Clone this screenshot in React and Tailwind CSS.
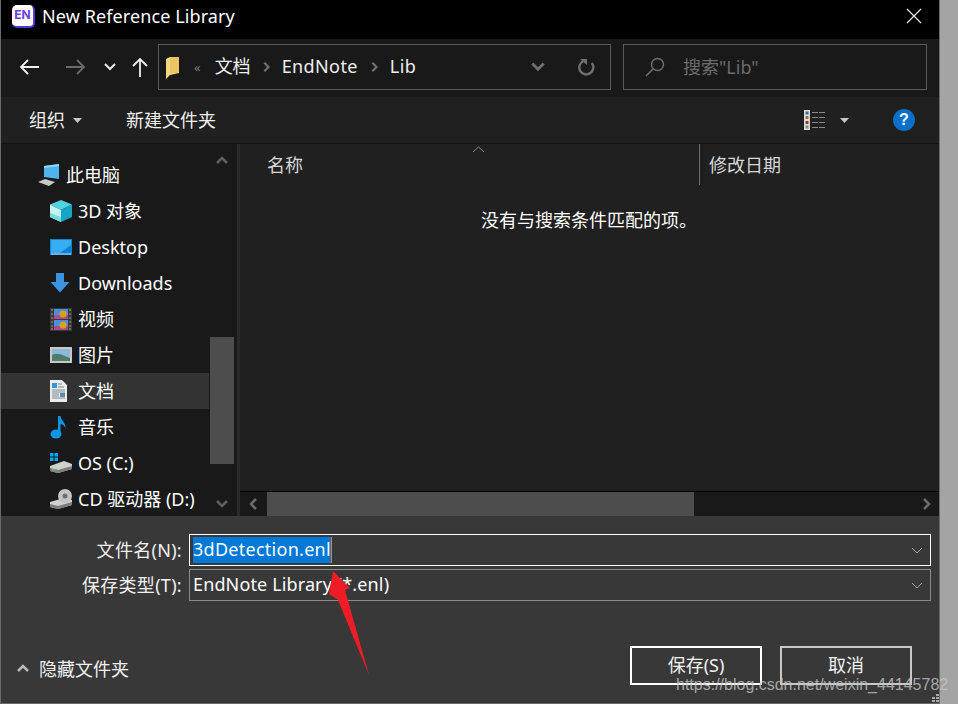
import React from 'react'

function Chevron({ dir = 'down', className = '', size = 14, width = 2.5, color = '#6b6b6b' }) {
  const paths = {
    down: 'M2 4 L7 9 L12 4',
    up: 'M2 10 L7 5 L12 10',
    left: 'M9 2 L4 7 L9 12',
    right: 'M5 2 L10 7 L5 12',
  }
  return (
    <svg width={size} height={size} viewBox="0 0 14 14" className={className}>
      <path d={paths[dir]} fill="none" stroke={color} strokeWidth={width} />
    </svg>
  )
}

function Caret() {
  return (
    <svg width="9" height="5" viewBox="0 0 9 5">
      <path d="M0 0 H9 L4.5 5 Z" fill="#c8c8c8" />
    </svg>
  )
}

function PcIcon() {
  return (
    <svg width="24" height="24" viewBox="0 0 24 24">
      <path d="M7 3 L22 1 V16 L7 14 Z" fill="#4fb3ee" />
      <path d="M7 3 L22 1 V3 L7 5 Z" fill="#8fd4f8" />
      <path d="M1 19 L8 16 L18 19 L12 23 Z" fill="#c9c9c9" />
    </svg>
  )
}

function CubeIcon() {
  return (
    <svg width="22" height="22" viewBox="0 0 22 22">
      <path d="M11 0 L22 4.5 L11 10 L0 4.5 Z" fill="#4fd3e0" />
      <path d="M0 4.5 L11 10 V22 L0 17 Z" fill="#c4f3f4" />
      <path d="M22 4.5 L11 10 V22 L22 17 Z" fill="#17a5c4" />
      <path d="M0 13 L11 17 V22 L0 17 Z" fill="#6fdcdf" />
    </svg>
  )
}

function DesktopIcon() {
  return (
    <svg width="22" height="16" viewBox="0 0 22 16">
      <rect width="22" height="16" fill="#0d84d8" />
      <path d="M1 14 L1 1 H21 V6 L10 14 Z" fill="#35aef2" />
      <rect x="1" y="14.5" width="20" height="1" fill="#bfe4fa" />
    </svg>
  )
}

function DownloadIcon() {
  return (
    <svg width="20" height="20" viewBox="0 0 20 20">
      <path d="M6 0 H14 V9 H19.5 L10 19.5 L0.5 9 H6 Z" fill="#3a94e0" />
    </svg>
  )
}

function VideoIcon() {
  return (
    <svg width="22" height="23" viewBox="0 0 22 23">
      <rect width="22" height="23" fill="#3a3a3a" />
      <path d="M1 2 H3 M1 6 H3 M1 10 H3 M1 14 H3 M1 18 H3 M1 21 H3 M19 2 H21 M19 6 H21 M19 10 H21 M19 14 H21 M19 18 H21 M19 21 H21" stroke="#9a9a9a" strokeWidth="1" />
      <rect x="4" y="1" width="14" height="10" fill="#4a8fe0" />
      <rect x="4" y="12" width="14" height="10" fill="#4a8fe0" />
      <rect x="4" y="7" width="14" height="4" fill="#b04a8a" />
      <rect x="4" y="18" width="14" height="4" fill="#b04a8a" />
      <circle cx="13" cy="6" r="3.5" fill="#d8a020" />
      <circle cx="13" cy="17" r="3.5" fill="#d8a020" />
    </svg>
  )
}

function PictureIcon() {
  return (
    <svg width="22" height="16" viewBox="0 0 22 16">
      <rect width="22" height="16" fill="#c8c8c8" />
      <rect x="2" y="2" width="18" height="12" fill="#8db9d8" />
      <path d="M2 8 C7 5 12 8 20 11 V14 H2 Z" fill="#4d7d6a" />
    </svg>
  )
}

function DocIcon() {
  return (
    <svg width="17" height="22" viewBox="0 0 17 22">
      <path d="M0 0 H12 L17 5 V22 H0 Z" fill="#ececec" />
      <rect x="2" y="3" width="5" height="5" fill="#3a94e0" />
      <path d="M8 4 H12 M8 7 H14 M2 10 H15 M2 12 H15 M2 14 H9 M2 16 H9 M2 18 H15" stroke="#7a8a96" strokeWidth="1" />
      <rect x="10" y="13" width="5" height="4" fill="#5a8fb0" />
    </svg>
  )
}

function MusicIcon() {
  return (
    <svg width="16" height="24" viewBox="0 0 16 24">
      <ellipse cx="6" cy="19" rx="5.5" ry="4.5" fill="#0a97e8" />
      <path d="M8 1 H10.5 C11 6 16 7 15.5 14 C15 11 13 9.5 10.5 9 V19 H8 Z" fill="#0a97e8" />
    </svg>
  )
}

function DriveOsIcon() {
  return (
    <svg width="22" height="20" viewBox="0 0 22 20">
      <rect x="0" y="0" width="3.5" height="3.5" fill="#00a8f0" />
      <rect x="4.5" y="0" width="3.5" height="3.5" fill="#00a8f0" />
      <rect x="0" y="4.5" width="3.5" height="3.5" fill="#00a8f0" />
      <rect x="4.5" y="4.5" width="3.5" height="3.5" fill="#00a8f0" />
      <path d="M0 13 L14 8 L22 11 V16 L8 20 L0 18 Z" fill="#d0d0d0" />
      <path d="M0 15 L8 17 L22 13 V16 L8 20 L0 18 Z" fill="#7d7d7d" />
      <rect x="2" y="16" width="5" height="1.5" fill="#56c060" />
    </svg>
  )
}

function DriveCdIcon() {
  return (
    <svg width="22" height="20" viewBox="0 0 22 20">
      <path d="M0 13 L14 9 L22 11 V16 L8 20 L0 18 Z" fill="#d0d0d0" />
      <path d="M0 15 L8 17 L22 13 V16 L8 20 L0 18 Z" fill="#7d7d7d" />
      <circle cx="15" cy="7" r="7" fill="#c4c4c4" />
      <circle cx="15" cy="7" r="2.5" fill="#707070" />
    </svg>
  )
}

const navItems = [
  { label: '3D 对象', icon: <CubeIcon /> },
  { label: 'Desktop', icon: <DesktopIcon /> },
  { label: 'Downloads', icon: <DownloadIcon /> },
  { label: '视频', icon: <VideoIcon /> },
  { label: '图片', icon: <PictureIcon /> },
  { label: '文档', icon: <DocIcon />, active: true },
  { label: '音乐', icon: <MusicIcon /> },
  { label: 'OS (C:)', icon: <DriveOsIcon /> },
  { label: 'CD 驱动器 (D:)', icon: <DriveCdIcon /> },
]

function Sidebar() {
  return (
    <div className="w-[236px] shrink-0 flex bg-[#191919] overflow-hidden">
      <div className="w-[208px] shrink-0 pt-[13px]">
        <div className="h-[36px] flex items-center pl-[36px]">
          <div className="w-[29px] flex items-center"><PcIcon /></div>
          <span className="text-white whitespace-nowrap">此电脑</span>
        </div>
        {navItems.map((item) => (
          <div key={item.label} className={`h-[36px] flex items-center pl-[48px] ${item.active ? 'bg-[#333333]' : ''}`}>
            <div className="w-[29px] flex items-center justify-start pl-[1px]">{item.icon}</div>
            <span className="text-white whitespace-nowrap">{item.label}</span>
          </div>
        ))}
      </div>
      <div className="w-[24px] ml-[1px] shrink-0 flex flex-col items-center">
        <div className="h-[193px] w-full flex justify-center pt-[9px]">
          <Chevron dir="up" color="#5f5f5f" />
        </div>
        <div className="h-[127px] w-full bg-[#4d4d4d]"></div>
        <div className="h-[52px] w-full flex justify-center items-end pb-[5px]">
          <Chevron dir="down" color="#5f5f5f" />
        </div>
      </div>
    </div>
  )
}

function FileList() {
  return (
    <div className="flex-1 flex flex-col bg-[#202020] border-l-[3px] border-[#2a2a2a] relative">
      <div className="h-[41px] flex relative">
        <div className="w-[459px] pl-[27px] flex items-center text-[#d8d8d8] relative">
          名称
          <svg width="13" height="7" viewBox="0 0 13 7" className="absolute left-[232px] top-[2px]">
            <path d="M1 6 L6.5 1 L12 6" fill="none" stroke="#8a8a8a" strokeWidth="1" />
          </svg>
        </div>
        <div className="w-px h-[41px] bg-[#6b6b6b]"></div>
        <div className="pl-[9px] flex items-center text-[#d8d8d8]">修改日期</div>
      </div>
      <div className="flex-1 text-white pl-[241px] pt-[23px] whitespace-nowrap">没有与搜索条件匹配的项。</div>
      <div className="h-[25px] bg-[#191919] flex items-center border-t border-black">
        <div className="w-[27px] flex justify-center"><Chevron dir="left" color="#6b6b6b" /></div>
        <div className="w-[427px] h-full bg-[#4d4d4d]"></div>
        <div className="flex-1"></div>
        <div className="w-[27px] flex justify-center"><Chevron dir="right" color="#6b6b6b" /></div>
      </div>
    </div>
  )
}

function FormRow({ label, active, tracking, children }) {
  return (
    <div className="flex items-center">
      <div className="w-[181px] text-right text-[#f0f0f0] whitespace-nowrap tracking-[0.3px]">{label}</div>
      <div className={`ml-[7px] w-[742px] h-[32px] border flex items-center pl-[3px] pr-[7px] ${active ? 'border-white' : 'border-[#8c8c8c]'}`}>
        <div className={`flex-1 text-white whitespace-nowrap ${tracking}`}>{children}</div>
        <svg width="12" height="7" viewBox="0 0 12 7">
          <path d="M1 1 L6 6 L11 1" fill="none" stroke="#a8a8a8" strokeWidth="1" />
        </svg>
      </div>
    </div>
  )
}

export default function App() {
  return (
    <div className="w-[958px] h-[704px] flex bg-[#a4a4a4] overflow-hidden text-[18px] leading-[24px] font-['Noto_Sans','Noto_Sans_CJK_SC',sans-serif]">
      <div className="w-[940px] h-[704px] shrink-0 flex flex-col border-l border-r border-b border-[#6a6a6a] relative">
        {/* title bar */}
        <div className="h-[39px] bg-black flex items-center pl-[11px] pr-[17px] pb-[7px]">
          <div className="w-[23px] h-[23px] rounded-[5px] bg-white flex items-center justify-center text-[12px] font-bold text-[#6a3de8] font-['Inter',sans-serif] border-r-2 border-b-2 border-[#5a35d8]">EN</div>
          <span className="ml-[7px] text-white whitespace-nowrap tracking-[0.1px]">New Reference Library</span>
          <div className="flex-1"></div>
          <svg width="16" height="16" viewBox="0 0 16 16">
            <path d="M1 1 L15 15 M15 1 L1 15" stroke="#e8e8e8" strokeWidth="1.2" />
          </svg>
        </div>

        {/* address row */}
        <div className="h-[58px] bg-[#191919] flex items-center pb-[2px]">
          <div className="w-[157px] flex items-center pl-[18px]">
            <svg width="20" height="16" viewBox="0 0 20 16">
              <path d="M9 1 L2 8 L9 15 M2 8 H20" fill="none" stroke="#f0f0f0" strokeWidth="1.8" />
            </svg>
            <svg width="20" height="16" viewBox="0 0 20 16" className="ml-[27px]">
              <path d="M11 1 L18 8 L11 15 M18 8 H0" fill="none" stroke="#6a6a6a" strokeWidth="1.8" />
            </svg>
            <Chevron dir="down" color="#e8e8e8" width={2} className="ml-[17px]" />
            <svg width="16" height="20" viewBox="0 0 16 20" className="ml-[15px]">
              <path d="M1 9 L8 2 L15 9 M8 2 V20" fill="none" stroke="#f0f0f0" strokeWidth="1.8" />
            </svg>
          </div>
          <div className="w-[453px] h-[46px] border border-[#5a5a5a] flex items-center pl-[6px]">
            <svg width="15" height="23" viewBox="0 0 15 23">
              <path d="M1 3 L5 1 H14 V17 L5 19 L1 23 Z" fill="#f5d77f" />
              <path d="M5 1 H14 V17 H5 Z" fill="#eac564" />
            </svg>
            <span className="ml-[14px] text-[#7a7a7a] text-[13px]">«</span>
            <span className="ml-[14px] text-[#efefef] mb-[2px]">文档</span>
            <Chevron dir="right" size={12} className="ml-[9px] mr-[10px]" color="#707070" />
            <span className="text-[#efefef] tracking-[0.4px] mb-[2px]">EndNote</span>
            <Chevron dir="right" size={12} className="ml-[10px] mr-[10px]" color="#707070" />
            <span className="text-[#efefef] tracking-[0.4px] mb-[2px]">Lib</span>
            <div className="flex-1"></div>
            <Chevron dir="down" size={16} color="#707070" />
            <div className="w-[30px] ml-[26px] flex justify-center">
              <svg width="18" height="18" viewBox="0 0 18 18">
                <path d="M13.8 5 A7 7 0 1 1 5 3.2" fill="none" stroke="#707070" strokeWidth="2.4" />
                <path d="M2 1 H9 V7 Z" fill="#707070" />
              </svg>
            </div>
            <div className="w-[8px]"></div>
          </div>
          <div className="ml-[12px] w-[304px] h-[46px] border border-[#5a5a5a] flex items-center pl-[21px]">
            <svg width="20" height="20" viewBox="0 0 20 20">
              <circle cx="12.5" cy="7.5" r="6" fill="none" stroke="#6f6f6f" strokeWidth="1.4" />
              <path d="M8 12 L1 19" stroke="#6f6f6f" strokeWidth="1.6" />
            </svg>
            <span className="ml-[18px] text-[#6c6c6c] whitespace-nowrap">搜索"Lib"</span>
          </div>
        </div>

        {/* toolbar */}
        <div className="h-[47px] bg-[#202020] flex items-center border-b border-[#141414] pl-[28px]">
          <span className="text-[#f0f0f0]">组织</span>
          <span className="ml-[8px] flex"><Caret /></span>
          <span className="ml-[44px] text-[#f0f0f0]">新建文件夹</span>
          <div className="flex-1"></div>
          <svg width="22" height="20" viewBox="0 0 22 20">
            <rect x="0" y="0" width="6" height="20" fill="#dcdcdc" />
            <rect x="1.5" y="1.5" width="3" height="3" fill="#3a6ea8" />
            <rect x="1.5" y="6" width="3" height="3" fill="#8a7a3a" />
            <rect x="1.5" y="11" width="3" height="3" fill="#b03030" />
            <rect x="1.5" y="15.5" width="3" height="3" fill="#7a9a5a" />
            <path d="M8 2.5 H22 M8 7.5 H22 M8 12.5 H22 M8 17.5 H22" stroke="#8a8a8a" strokeWidth="1" strokeDasharray="6 1" />
          </svg>
          <span className="ml-[14px] flex"><Caret /></span>
          <div className="ml-[44px] mr-[24px] w-[22px] h-[22px] rounded-full bg-[#0a6fc8] flex items-center justify-center text-white text-[16px] font-bold font-['Liberation_Sans',sans-serif]">?</div>
        </div>

        {/* middle */}
        <div className="h-[372px] flex">
          <Sidebar />
          <FileList />
        </div>

        {/* bottom form */}
        <div className="flex-1 bg-[#383838] flex flex-col pt-[18px]">
          <div className="flex flex-col gap-[3px]">
            <FormRow label="文件名(N):" active tracking="tracking-[0.27px]">
              <span className="inline-block bg-[#0078d7] h-[26px] leading-[24px] border-r border-[#f08020]">3dDetection.enl</span>
            </FormRow>
            <FormRow label="保存类型(T):" tracking="tracking-[0.13px] mb-[2px]">EndNote Library (*.enl)</FormRow>
          </div>
          <div className="flex items-start mt-[45px]">
            <div className="w-[38px] flex pl-[15px] mt-[15px]">
              <Chevron dir="up" color="#b8b8b8" />
            </div>
            <span className="text-[#f0f0f0] mt-[11px]">隐藏文件夹</span>
            <div className="flex-1"></div>
            <button className="w-[132px] h-[39px] border-2 border-white text-[#f0f0f0] mr-[18px] pb-[1px]">保存(S)</button>
            <button className="w-[132px] h-[39px] border-2 border-[#c8c8c8] text-[#f0f0f0] mr-[27px] pb-[1px]">取消</button>
          </div>
        </div>

        {/* red annotation arrow */}
        <svg width="50" height="110" viewBox="0 0 50 110" className="absolute left-[325px] top-[570px]">
          <path d="M7 1 L24 18 L19 20 L43 105 L12 30 L3 24 Z" fill="#ee1c25" />
        </svg>

        {/* resize grip */}
        <svg width="10" height="10" viewBox="0 0 10 10" className="absolute left-[929px] top-[693px]">
          <path d="M6 1 H9 V3 H6 Z M6 4 H9 V6 H6 Z M2 4 H5 V6 H2 Z M6 7 H9 V9 H6 Z M2 7 H5 V9 H2 Z" fill="#a8a8a8" />
        </svg>
      </div>

      {/* csdn watermark */}
      <div className="absolute left-[676px] top-[674px] text-[16px] leading-[22px] text-[#c4c4c4]/80 font-['Liberation_Sans',sans-serif] whitespace-nowrap">https://blog.csdn.net/weixin_44145782</div>
    </div>
  )
}
